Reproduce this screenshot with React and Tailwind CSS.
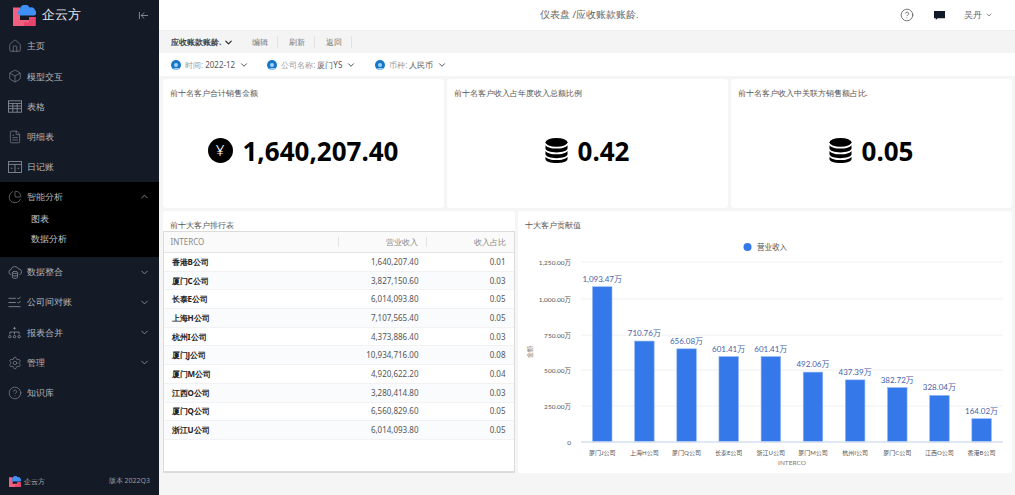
import React from 'react';
import {
  Home, Box, FileText, PieChart, ChevronUp, ChevronDown, CircleHelp,
  Settings, ArrowLeftToLine,
} from 'lucide-react';

const Logo = ({ className }) => (
  <svg viewBox="0 0 23 21" className={className}>
    <path d="M0 2.500h7V15h9v-3h6.500v9H0z" fill="#f2607f" />
    <path d="M16 12h6.500v9H11v-3.500h5z" fill="#e8456e" />
    <path d="M7 10.500a3 3 0 0 1 0-5.800A5 5 0 0 1 16.500 2.500a4 4 0 0 1 5.500 2.800A2.800 2.800 0 0 1 21 10.500z" fill="#3f90f5" />
  </svg>
);

const TableIcon = () => (
  <svg viewBox="0 0 16 14" className="w-[14px] h-[13px]" fill="none" stroke="#8a8f99" strokeWidth="1">
    <rect x="0.5" y="0.5" width="15" height="13" />
    <path d="M.5 3.500h15M.5 6.500h15M.5 9.500h15M5.500 3.500v10M10.500 3.500v10" />
  </svg>
);

const LedgerIcon = () => (
  <svg viewBox="0 0 16 14" className="w-[14px] h-[12px]" fill="none" stroke="#8a8f99" strokeWidth="1">
    <rect x="0.5" y="0.5" width="15" height="13" />
    <path d="M.5 4h15M8 4v9.500M3 8.500h2M11 8.500h2" />
  </svg>
);

const CloudDbIcon = () => (
  <svg viewBox="0 0 16 15" className="w-[14px] h-[14px]" fill="none" stroke="#8a8f99" strokeWidth="0.9">
    <path d="M3.500 10.500A3 3 0 0 1 3.500 4.600 4.500 4.500 0 0 1 12 4a3.300 3.300 0 0 1 1 6.500" />
    <ellipse cx="8" cy="8" rx="3" ry="1.200" />
    <path d="M5 8v5.500c0 .7 1.300 1.200 3 1.200s3-.5 3-1.200V8M5 10.800c0 .7 1.300 1.200 3 1.200s3-.5 3-1.200" />
  </svg>
);

const CheckListIcon = () => (
  <svg viewBox="0 0 14 14" className="w-[13px] h-[13px]" fill="none" stroke="#8a8f99" strokeWidth="0.9">
    <path d="M.5 2.500h8M.5 7h8M.5 11.500h13M10 2l1.300 1.300L13.500.8M10 6.500l1.300 1.300 2.200-2.500" />
  </svg>
);

const MergeIcon = () => (
  <svg viewBox="0 0 14 14" className="w-[13px] h-[13px]" fill="none" stroke="#8a8f99" strokeWidth="0.9">
    <circle cx="2" cy="11.500" r="1.300" />
    <circle cx="7" cy="11.500" r="1.300" />
    <circle cx="12" cy="11.500" r="1.300" />
    <path d="M2 9V6.500h10V9M7 9V6.500M7 1v3M5.500 2.500h3" />
  </svg>
);

const nav1 = [
  { label: '主页', icon: <Home size={14} strokeWidth={1.1} /> },
  { label: '模型交互', icon: <Box size={14} strokeWidth={1.1} /> },
  { label: '表格', icon: <TableIcon /> },
  { label: '明细表', icon: <FileText size={14} strokeWidth={1.1} /> },
  { label: '日记账', icon: <LedgerIcon /> },
];

const nav2 = [
  { label: '数据整合', icon: <CloudDbIcon />, arrow: true },
  { label: '公司间对账', icon: <CheckListIcon />, arrow: true },
  { label: '报表合并', icon: <MergeIcon />, arrow: true },
  { label: '管理', icon: <Settings size={14} strokeWidth={1.1} />, arrow: true },
  { label: '知识库', icon: <CircleHelp size={14} strokeWidth={1.1} /> },
];

const NavRow = ({ item }) => (
  <div className="h-[30.200px] flex items-center pl-[8px] pr-[8px] text-[9px] text-[#b4b7bc]">
    <span className="w-[19px] flex justify-start text-[#8a8f99]">{item.icon}</span>
    <span className="flex-1">{item.label}</span>
    {item.arrow && <ChevronDown size={11} className="text-[#8a8f99] mr-[1px]" />}
  </div>
);

const Sidebar = () => (
  <div className="w-[159px] h-full bg-[#141a26] flex flex-col shrink-0">
    <div className="h-[31px] flex items-center pl-[13px] pr-[10px]">
      <Logo className="w-[23px] h-[21px]" />
      <span className="ml-[6px] text-[12.500px] text-[#e4e6ea] flex-1">企云方</span>
      <ArrowLeftToLine size={11} className="text-[#8a8f99]" />
    </div>
    {nav1.map((n) => <NavRow key={n.label} item={n} />)}
    <div className="bg-black h-[75px]">
      <div className="h-[30px] flex items-center pl-[8px] pr-[8px] text-[9px] text-[#b4b7bc]">
        <span className="w-[19px] text-[#8a8f99]"><PieChart size={14} strokeWidth={1.1} /></span>
        <span className="flex-1">智能分析</span>
        <ChevronUp size={11} className="text-[#8a8f99] mr-[1px]" />
      </div>
      <div className="pl-[31px] text-[8.500px] text-[#c4c7cc] h-[20px] flex items-center -mt-[3px]">图表</div>
      <div className="pl-[31px] text-[8.500px] text-[#c4c7cc] h-[20px] flex items-center">数据分析</div>
    </div>
    {nav2.map((n) => <NavRow key={n.label} item={n} />)}
    <div className="mt-auto h-[27px] flex items-center pl-[9px] pr-[9px]">
      <Logo className="w-[12px] h-[11px]" />
      <span className="ml-[3px] text-[6.500px] text-[#b0b3b8] flex-1">企云方</span>
      <span className="text-[7px] text-[#9a9da3]">版本 2022Q3</span>
    </div>
  </div>
);

const Topbar = () => (
  <div className="h-[31px] bg-white border-b border-[#eeeeee] flex items-center shrink-0">
    <div className="flex-1 text-[9.500px] text-[#666666] pl-[381px]">仪表盘 /应收账款账龄.</div>
    <div className="flex items-center pr-[22px] text-[#555555]">
      <CircleHelp size={14} strokeWidth={1.2} className="text-[#444444]" />
      <svg viewBox="0 0 12 12" className="w-[11px] h-[11px] ml-[20px]"><path d="M0 1h12v8H4l-2 2V9H0z" fill="#111827" /></svg>
      <span className="ml-[19px] text-[9px] text-[#666666]">吴丹</span>
      <ChevronDown size={8} className="ml-[3px]" />
    </div>
  </div>
);

const Toolbar = () => (
  <div className="h-[22px] bg-[#f4f4f4] flex items-center pl-[12px] shrink-0 text-[8px]">
    <span className="font-bold text-[#444444]">应收账款账龄.</span>
    <ChevronDown size={11} strokeWidth={2.400} className="ml-[2px] text-[#222222]" />
    <span className="ml-[18px] text-[#777777]">编辑</span>
    <span className="ml-[9px] h-[12px] w-px bg-[#e2e2e2]" />
    <span className="ml-[11px] text-[#777777]">刷新</span>
    <span className="ml-[9px] h-[12px] w-px bg-[#e2e2e2]" />
    <span className="ml-[11px] text-[#777777]">返回</span>
    <span className="ml-[9px] h-[12px] w-px bg-[#e2e2e2]" />
  </div>
);

const Filter = ({ label, value, className }) => (
  <div className={`flex items-center text-[8px] ${className}`}>
    <span className="w-[10px] h-[10px] rounded-full bg-[#1677c9] flex flex-col items-center justify-end overflow-hidden">
      <span className="w-[4px] h-[4px] rounded-full bg-[#9fd0f5] mb-[0.500px]" />
      <span className="w-[7px] h-[2px] rounded-t-full bg-[#9fd0f5]" />
    </span>
    <span className="ml-[4px] text-[#999999]">{label}</span>
    <span className="ml-[2px] text-[#555555]">{value}</span>
    <ChevronDown size={10} strokeWidth={2} className="ml-[4px] text-[#333333]" />
  </div>
);

const Filters = () => (
  <div className="h-[23px] bg-white flex items-center pl-[12px] shrink-0">
    <Filter label="时间:" value="2022-12" />
    <Filter label="公司名称:" value="厦门YS" className="ml-[18px]" />
    <Filter label="币种:" value="人民币" className="ml-[19px]" />
  </div>
);

const Yen = () => (
  <span className="w-[25px] h-[25px] rounded-full bg-black text-white flex items-center justify-center text-[15px] font-light leading-none">¥</span>
);

const Coins = () => (
  <svg viewBox="0 0 24 26" className="w-[23px] h-[25px]" fill="#000">
    <ellipse cx="12" cy="4.500" rx="11.500" ry="4.500" />
    <path d="M.5 7.500C2 10 7 11 12 11s10-1 11.500-3.500V11C23.500 13.500 18 15 12 15S.5 13.500.5 11z" />
    <path d="M.5 13.500C2 16 7 17 12 17s10-1 11.500-3.500V17C23.500 19.500 18 21 12 21S.5 19.500.5 17z" />
    <path d="M.5 19.500C2 22 7 23 12 23s10-1 11.500-3.500V22C23.500 24.500 18 26 12 26S.5 24.500.5 22z" />
  </svg>
);

const StatCard = ({ title, value, icon }) => (
  <div className="flex-1 bg-white rounded-[3px] flex flex-col">
    <div className="pl-[7px] pt-[7px] text-[8px] leading-[13px] text-[#555555]">{title}</div>
    <div className="flex-1 flex items-center justify-center pb-[6px]">
      {icon}
      <span className="ml-[10px] text-[26px] leading-none font-bold text-black">{value}</span>
    </div>
  </div>
);

const rows = [
  ['香港B公司', '1,640,207.40', '0.01'],
  ['厦门C公司', '3,827,150.60', '0.03'],
  ['长泰E公司', '6,014,093.80', '0.05'],
  ['上海H公司', '7,107,565.40', '0.05'],
  ['杭州I公司', '4,373,886.40', '0.03'],
  ['厦门J公司', '10,934,716.00', '0.08'],
  ['厦门M公司', '4,920,622.20', '0.04'],
  ['江西O公司', '3,280,414.80', '0.03'],
  ['厦门Q公司', '6,560,829.60', '0.05'],
  ['浙江U公司', '6,014,093.80', '0.05'],
];

const RankTable = () => (
  <div className="w-[352px] bg-white rounded-t-[3px] flex flex-col shrink-0">
    <div className="h-[20px] pl-[7px] pt-[7px] text-[8px] leading-[13px] text-[#555555]">前十大客户排行表</div>
    <div className="flex-1 border border-[#dcdcdc] border-b-2 flex flex-col">
      <div className="h-[21px] bg-[#fafafa] border-b border-[#e4e4e4] flex items-center text-[8px] text-[#888888] shrink-0">
        <span className="w-[175px] pl-[7px] h-[10px] flex items-center border-r border-[#e4e4e4]">INTERCO</span>
        <span className="w-[88px] pr-[8px] h-[10px] flex items-center justify-end border-r border-[#e4e4e4]">营业收入</span>
        <span className="flex-1 pr-[8px] text-right">收入占比</span>
      </div>
      {rows.map((r, i) => (
        <div key={r[0]} className={`h-[18.700px] flex items-center text-[8px] border-b border-[#f2f2f2] shrink-0 ${i % 2 ? 'bg-[#f9fbfd]' : 'bg-white'}`}>
          <span className="w-[175px] pl-[8px] font-bold text-[#222222]">{r[0]}</span>
          <span className="w-[88px] pr-[8px] text-right text-[#555555]">{r[1]}</span>
          <span className="flex-1 pr-[8px] text-right text-[#555555]">{r[2]}</span>
        </div>
      ))}
    </div>
  </div>
);

const bars = [
  ['厦门J公司', 1093.47], ['上海H公司', 710.76], ['厦门Q公司', 656.08], ['长泰E公司', 601.41], ['浙江U公司', 601.41],
  ['厦门M公司', 492.06], ['杭州I公司', 437.39], ['厦门C公司', 382.72], ['江西O公司', 328.04], ['香港B公司', 164.02],
];
const ticks = [['1,250.00万', 262], ['1,000.00万', 299], ['750.00万', 335], ['500.00万', 370], ['250.00万', 406]];

// chart coords are page coords minus the panel origin (518, 211)
const Chart = () => (
  <svg viewBox="0 0 494 262" className="w-[494px] h-[262px]" fontFamily="Lato, 'Noto Sans CJK SC', sans-serif">
    <circle cx="229.500" cy="36" r="4" fill="#3578ea" />
    <text x="239" y="39" fontSize="7.500" fill="#555">营业收入</text>
    {ticks.map(([t, y]) => (
      <g key={t}>
        <line x1="63" x2="485" y1={y - 211} y2={y - 211} stroke="#f0f0f0" />
        <text x="53" y={y - 208.500} fontSize="6.500" fill="#555" textAnchor="end">{t}</text>
      </g>
    ))}
    <text x="53" y="233.500" fontSize="6.500" fill="#555" textAnchor="end">0</text>
    <text transform="translate(14 141) rotate(-90)" fontSize="6" fill="#777" textAnchor="middle">金额</text>
    {bars.map(([name, v], i) => {
      const x = 74.500 + i * 42.150;
      const h = (v / 1250) * 177.500;
      return (
        <g key={name}>
          <rect x={x} y={231 - h} width="19.500" height={h} fill="#3578ea" stroke="#8db4f5" strokeWidth="0.6" />
          <text x={x + 9.700} y={231 - h - 5} fontSize="8" fill="#4b62a8" textAnchor="middle">{v.toLocaleString('en-US', { minimumFractionDigits: 2 })}万</text>
          <text x={x + 9.700} y="244" fontSize="6" fill="#555" textAnchor="middle">{name}</text>
        </g>
      );
    })}
    <line x1="63" x2="485" y1="231" y2="231" stroke="#d5e0f0" strokeWidth="1.500" />
    <text x="274" y="254" fontSize="6.500" fill="#777" textAnchor="middle">INTERCO</text>
  </svg>
);

const ChartPanel = () => (
  <div className="w-[494px] bg-white rounded-[3px] relative shrink-0">
    <div className="absolute left-[7px] top-[7px] text-[8px] leading-[13px] text-[#555555]">十大客户贡献值</div>
    <Chart />
  </div>
);

export default function App() {
  return (
    <div className="w-[1015px] h-[495px] flex bg-[#f5f5f5] overflow-hidden font-[family-name:Lato,'Noto_Sans_CJK_SC',sans-serif]">
      <Sidebar />
      <div className="flex-1 flex flex-col min-w-0">
        <Topbar />
        <Toolbar />
        <Filters />
        <div className="flex-1 px-[3.500px] pt-[3px] flex flex-col gap-[3px]">
          <div className="h-[129px] flex gap-[3px] shrink-0">
            <StatCard title="前十名客户合计销售金额" value="1,640,207.40" icon={<Yen />} />
            <StatCard title="前十名客户收入占年度收入总额比例" value="0.42" icon={<Coins />} />
            <StatCard title="前十名客户收入中关联方销售额占比." value="0.05" icon={<Coins />} />
          </div>
          <div className="h-[262px] flex gap-[3px] shrink-0">
            <RankTable />
            <ChartPanel />
          </div>
        </div>
      </div>
    </div>
  );
}
